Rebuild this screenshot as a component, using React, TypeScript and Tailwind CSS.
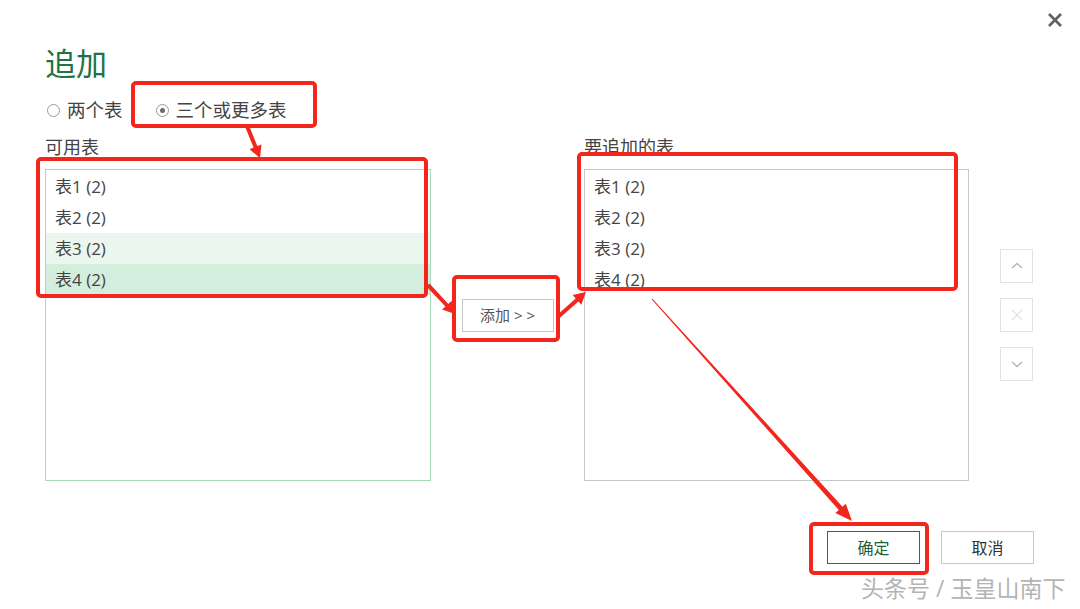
import React from "react";

const FONT = {
	fontFamily: '"Open Sans", "Noto Sans CJK SC", sans-serif',
};

const tables = ["表1 (2)", "表2 (2)", "表3 (2)", "表4 (2)"];

type Pt = [number, number];

// tapered arrow outline from a start point to a tip
function arrowPoints(
	[x1, y1]: Pt,
	[x2, y2]: Pt,
	w0: number,
	w1: number,
	headLen: number,
	headW: number,
) {
	const dx = x2 - x1;
	const dy = y2 - y1;
	const len = Math.hypot(dx, dy);
	const ux = dx / len;
	const uy = dy / len;
	const px = -uy;
	const py = ux;
	const bx = x2 - ux * headLen;
	const by = y2 - uy * headLen;
	const pts: Pt[] = [
		[x1 + (px * w0) / 2, y1 + (py * w0) / 2],
		[bx + (px * w1) / 2, by + (py * w1) / 2],
		[bx + (px * headW) / 2, by + (py * headW) / 2],
		[x2, y2],
		[bx - (px * headW) / 2, by - (py * headW) / 2],
		[bx - (px * w1) / 2, by - (py * w1) / 2],
		[x1 - (px * w0) / 2, y1 - (py * w0) / 2],
	];
	return pts.map((p) => `${p[0].toFixed(1)},${p[1].toFixed(1)}`).join(" ");
}

function Radio({ checked, label }: { checked?: boolean; label: string }) {
	return (
		<label className="flex items-center gap-[7px]">
			<span className="flex h-[13px] w-[13px] items-center justify-center rounded-full border border-[#9a9a9a] bg-white">
				{checked && <span className="h-[5px] w-[5px] rounded-full bg-[#6b6b6b]" />}
			</span>
			<span className="text-[18.5px] leading-[24px] text-[#444]">{label}</span>
		</label>
	);
}

function SideButton({ children }: { children: React.ReactNode }) {
	return (
		<div className="flex h-[34px] w-[33px] items-center justify-center border border-[#e2e2e2] bg-white">
			{children}
		</div>
	);
}

function RedBox({ className }: { className: string }) {
	return (
		<div
			className={`pointer-events-none absolute rounded-[5px] border-[4px] border-[#f2261d] ${className}`}
		/>
	);
}

export default function App() {
	return (
		<div
			className="relative h-[609px] w-[1080px] overflow-hidden bg-white text-[#444]"
			style={FONT}
		>
			{/* close */}
			<div className="flex h-[40px] justify-end pr-[17px] pt-[12px]">
				<svg width="16" height="16" viewBox="0 0 16 16">
					<path d="M2 2 L14 14 M14 2 L2 14" stroke="#5f5f5f" strokeWidth="2.6" />
				</svg>
			</div>

			<div className="pl-[45px]">
				<h1 className="h-[46px] text-[31px] leading-[46px] text-[#217346]">追加</h1>

				<div className="flex h-[48px] items-center gap-[33px] pl-[2px]">
					<Radio label="两个表" />
					<Radio checked label="三个或更多表" />
				</div>

				<div className="flex">
					{/* available tables */}
					<div className="flex w-[386px] flex-col">
						<div className="h-[26px] text-[18px] leading-[26px]">可用表</div>
						<div className="mt-[9px] h-[312px] border border-[#a8d9b9] pt-[1px]">
							{tables.map((t, i) => (
								<div
									key={t}
									className={`h-[31px] pl-[9px] text-[17px] leading-[31px] ${
										i === 2 ? "bg-[#ebf6ef]" : i === 3 ? "bg-[#d3eedd]" : ""
									}`}
								>
									{t}
								</div>
							))}
						</div>
					</div>

					{/* add button */}
					<div className="flex w-[153px] justify-center pt-[165px]">
						<div className="flex h-[33px] w-[92px] items-center justify-center border border-[#c6c6c6] text-[15px] text-[#555]">
							添加 &gt; &gt;
						</div>
					</div>

					{/* tables to append */}
					<div className="flex w-[385px] flex-col">
						<div className="h-[26px] text-[18px] leading-[26px]">要追加的表</div>
						<div className="mt-[9px] h-[312px] border border-[#c8c8c8] pt-[1px]">
							{tables.map((t) => (
								<div key={t} className="h-[31px] pl-[9px] text-[17px] leading-[31px]">
									{t}
								</div>
							))}
						</div>
					</div>

					{/* order buttons */}
					<div className="ml-[31px] flex flex-col gap-[15px] pt-[115px]">
						<SideButton>
							<svg width="14" height="10" viewBox="0 0 14 10">
								<path d="M2 7 L7 2.5 L12 7" fill="none" stroke="#b9b9b9" strokeWidth="1.6" />
							</svg>
						</SideButton>
						<SideButton>
							<svg width="14" height="14" viewBox="0 0 14 14">
								<path d="M2 2 L12 12 M12 2 L2 12" stroke="#e4e4e4" strokeWidth="1.4" />
							</svg>
						</SideButton>
						<SideButton>
							<svg width="14" height="10" viewBox="0 0 14 10">
								<path d="M2 3 L7 7.5 L12 3" fill="none" stroke="#b9b9b9" strokeWidth="1.6" />
							</svg>
						</SideButton>
					</div>
				</div>
			</div>

			{/* footer */}
			<div className="mt-[50px] flex justify-end gap-[21px] pr-[46px]">
				<button className="h-[33px] w-[93px] border border-[#217346] text-[16px] text-[#1d5f39]">
					确定
				</button>
				<button className="h-[33px] w-[93px] border border-[#c8c8c8] text-[16px] text-[#333]">
					取消
				</button>
			</div>

			{/* watermark */}
			<div className="absolute left-[861px] top-[573px] text-[23px] leading-[30px] text-[#b4b4b4]">
				头条号 / 玉皇山南下
			</div>

			{/* annotations */}
			<RedBox className="left-[131px] top-[81px] h-[47px] w-[186px]" />
			<RedBox className="left-[36px] top-[157px] h-[141px] w-[392px]" />
			<RedBox className="left-[452px] top-[275px] h-[67px] w-[108px]" />
			<RedBox className="left-[577px] top-[152px] h-[139px] w-[381px]" />
			<RedBox className="left-[809px] top-[522px] h-[53px] w-[120px]" />

			<svg className="pointer-events-none absolute left-0 top-0" width="1080" height="609">
				<g fill="#f2261d">
					<polygon points={arrowPoints([247, 126], [260, 158], 4, 4, 12, 13)} />
					<polygon points={arrowPoints([428, 285], [455, 314], 4, 4, 12, 13)} />
					<polygon points={arrowPoints([559, 316], [586, 292], 4, 4, 12, 13)} />
					<polygon points={arrowPoints([652, 299], [852, 521], 1, 5, 17, 14)} />
				</g>
			</svg>
		</div>
	);
}
